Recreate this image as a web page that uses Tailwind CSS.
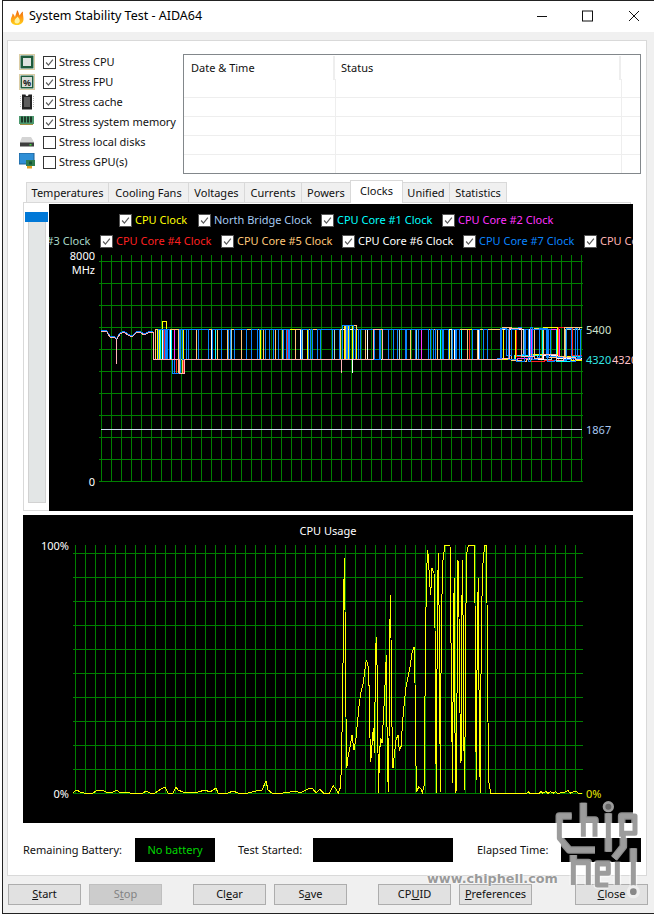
<!DOCTYPE html>
<html lang="en">
<head>
<meta charset="UTF-8">
<title>System Stability Test - AIDA64</title>
<script src="https://cdn.jsdelivr.net/npm/@tailwindcss/browser@4"></script>
</head>
<body class="bg-white">
<svg class="hidden">
  <symbol id="chk" viewBox="0 0 13 13"><path d="M2.500 6.500 5.200 9.500 10.500 3" fill="none" stroke="#5a5a5a" stroke-width="1.400"/></symbol>
</svg>

<div class="relative w-[654px] h-[914px] overflow-hidden font-['Noto_Sans',sans-serif] text-[11px] text-[#111] pl-[2px]">
<div class="h-[914px] border-l border-t border-b border-[#222] bg-[#f0f0f0] flex flex-col">

  <!-- title bar -->
  <div class="h-[31px] bg-white flex items-center shrink-0">
    <svg class="ml-[7px] w-[14px] h-[16px]" viewBox="0 0 14 16">
      <defs><linearGradient id="flame" x1="0" y1="1" x2="0" y2="0"><stop offset="0" stop-color="#ffd21a"/><stop offset=".5" stop-color="#ff9a14"/><stop offset="1" stop-color="#e8600c"/></linearGradient></defs>
      <path d="M7 16C2.500 16 0 13.500 1 9.500 1.500 7.500 2.500 7 2.500 4.500 4 5.500 4.500 7 5 8 5.500 5.500 7 3.500 7 1 8.500 2.500 9 5 9.500 6.500 10.500 5 11.500 3.500 13 2.500 12.500 5 13.500 7 13.500 10 13.500 13.500 11 16 7 16Z" fill="url(#flame)"/>
      <path d="M7 14.500C5 14.500 4 13 4.800 11 6 9 6.800 9 7.500 7.500 8.500 9 10 10 9.800 12 9.600 13.500 8.500 14.500 7 14.500Z" fill="#fff3a0"/>
    </svg>
    <span class="ml-[5px] text-[12.5px] text-black">System Stability Test - AIDA64</span>
    <div class="ml-auto flex items-center -mt-[1px]">
      <svg class="w-[12px] h-[12px] mr-[34px]" viewBox="0 0 12 12"><path d="M1 6.500H11" stroke="#111" stroke-width="1"/></svg>
      <svg class="w-[12px] h-[12px] mr-[34px]" viewBox="0 0 12 12"><rect x=".5" y="1" width="10" height="10" fill="none" stroke="#111"/></svg>
      <svg class="w-[12px] h-[12px] mr-[14px]" viewBox="0 0 12 12"><path d="M1 1 11 11M11 1 1 11" stroke="#111" stroke-width="1"/></svg>
    </div>
  </div>

  <!-- main panel -->
  <div class="mt-[8px] ml-[4px] w-[640px] h-[836px] bg-white border border-[#d9d9d9] shrink-0 flex flex-col">
    <div class="flex pt-[12px] pl-[11px] h-[139px] shrink-0">
      <div class="w-[164px] flex flex-col -mt-px">
        <label class="h-[20px] flex items-center">
          <svg class="w-[16px] h-[16px] mr-[8px]" viewBox="0 0 16 16"><rect x=".5" y=".5" width="15" height="15" fill="none" stroke="#b79a4a" stroke-dasharray="1 1"/><rect x="1.500" y="1.500" width="13" height="13" fill="#1f5c3c"/><rect x="4" y="4" width="8" height="8" fill="#dfe3df"/></svg>
          <span class="w-[13px] h-[13px] border border-[#333] bg-white mr-[3px]"><svg class="w-[11px] h-[11px]"><use href="#chk"/></svg></span>Stress CPU
        </label>
        <label class="h-[20px] flex items-center">
          <svg class="w-[16px] h-[16px] mr-[8px]" viewBox="0 0 16 16"><rect x=".5" y=".5" width="15" height="15" fill="none" stroke="#b79a4a" stroke-dasharray="1 1"/><rect x="1.500" y="1.500" width="13" height="13" fill="#1f5c3c"/><rect x="3" y="3" width="10" height="10" fill="#d8dcd8"/><text x="8" y="11.500" text-anchor="middle" font-size="9" font-weight="700" fill="#222">%</text></svg>
          <span class="w-[13px] h-[13px] border border-[#333] bg-white mr-[3px]"><svg class="w-[11px] h-[11px]"><use href="#chk"/></svg></span>Stress FPU
        </label>
        <label class="h-[20px] flex items-center">
          <svg class="w-[16px] h-[16px] mr-[8px]" viewBox="0 0 16 16"><path d="M3 .5H6.500A1.500 1.500 0 0 0 9.500 .5H13V15.500H3Z" fill="#222"/><rect x="5" y="3" width="6" height="10" fill="#5c5c5c"/><path d="M1.500 2V14M14.500 2V14" stroke="#bbb" stroke-dasharray="1 1"/></svg>
          <span class="w-[13px] h-[13px] border border-[#333] bg-white mr-[3px]"><svg class="w-[11px] h-[11px]"><use href="#chk"/></svg></span>Stress cache
        </label>
        <label class="h-[20px] flex items-center">
          <svg class="w-[16px] h-[16px] mr-[8px] -mt-[3px]" viewBox="0 0 16 16"><rect x="0" y="3" width="15" height="8" fill="#4d9a70"/><path d="M2 5H13M2 8H13" stroke="#1d3a28" stroke-width="3" stroke-dasharray="2 1"/><path d="M1 11.500H14" stroke="#a08c40"/></svg>
          <span class="w-[13px] h-[13px] border border-[#333] bg-white mr-[3px]"><svg class="w-[11px] h-[11px]"><use href="#chk"/></svg></span>Stress system memory
        </label>
        <label class="h-[20px] flex items-center">
          <svg class="w-[16px] h-[16px] mr-[8px]" viewBox="0 0 16 16"><path d="M3 3H12L15 8V12H1V8Z" fill="#d4d4d4"/><rect x="1" y="8.500" width="14" height="4" fill="#3d3d3d"/><rect x="10.500" y="10" width="2" height="1.500" fill="#3fd23f"/></svg>
          <span class="w-[13px] h-[13px] border border-[#333] bg-white mr-[3px]"></span>Stress local disks
        </label>
        <label class="h-[20px] flex items-center">
          <svg class="w-[16px] h-[16px] mr-[8px] -mt-[2px]" viewBox="0 0 16 16"><rect x="0" y="0" width="15" height="11" fill="#2f8fd6" stroke="#1d5f94"/><rect x="7" y="7" width="9" height="6" fill="#2f7d4f"/><rect x="10" y="8.500" width="3" height="3" fill="#153"/><rect x="8" y="13" width="5" height="2.500" fill="#e0a020"/></svg>
          <span class="w-[13px] h-[13px] border border-[#333] bg-white mr-[3px]"></span>Stress GPU(s)
        </label>
      </div>
      <!-- log list -->
      <div class="w-[458px] h-[120px] mt-px border border-[#82878b] flex flex-col">
        <div class="h-[25px] flex items-center relative shrink-0">
          <span class="w-[151px] pl-[7px] pt-px border-r-2 border-[#eeeeee] h-[24px] flex items-center">Date &amp; Time</span>
          <span class="w-[286px] pl-[6px] pt-px border-r-2 border-[#eeeeee] h-[24px] flex items-center">Status</span>
        </div>
        <div class="h-[19px] mt-[-1px] border-b border-[#eeeeee] flex"><span class="w-[152px] border-r border-[#eeeeee]"></span><span class="w-[286px] border-r border-[#eeeeee]"></span></div>
        <div class="h-[19px] border-b border-[#eeeeee] flex"><span class="w-[152px] border-r border-[#eeeeee]"></span><span class="w-[286px] border-r border-[#eeeeee]"></span></div>
        <div class="h-[19px] border-b border-[#eeeeee] flex"><span class="w-[152px] border-r border-[#eeeeee]"></span><span class="w-[286px] border-r border-[#eeeeee]"></span></div>
        <div class="h-[19px] border-b border-[#eeeeee] flex"><span class="w-[152px] border-r border-[#eeeeee]"></span><span class="w-[286px] border-r border-[#eeeeee]"></span></div>
        <div class="flex-1 flex"><span class="w-[152px] border-r border-[#eeeeee]"></span><span class="w-[286px] border-r border-[#eeeeee]"></span></div>
      </div>
    </div>

    <!-- tabs -->
    <div class="ml-[17px] pl-px h-[22px] flex items-end shrink-0 relative z-10">
      <div class="w-[83px] h-[20px] pt-px bg-[#f0f0f0] border border-b-0 border-[#d9d9d9] flex items-center justify-center">Temperatures</div>
      <div class="w-[81px] h-[20px] pt-px -ml-px bg-[#f0f0f0] border border-b-0 border-[#d9d9d9] flex items-center justify-center">Cooling Fans</div>
      <div class="w-[57px] h-[20px] pt-px -ml-px bg-[#f0f0f0] border border-b-0 border-[#d9d9d9] flex items-center justify-center">Voltages</div>
      <div class="w-[58px] h-[20px] pt-px -ml-px bg-[#f0f0f0] border border-b-0 border-[#d9d9d9] flex items-center justify-center">Currents</div>
      <div class="w-[50px] h-[20px] pt-px -ml-px bg-[#f0f0f0] border border-b-0 border-[#d9d9d9] flex items-center justify-center">Powers</div>
      <div class="w-[53px] h-[23px] -ml-px -mb-px pb-[2px] bg-white border border-b-0 border-[#d9d9d9] flex items-center justify-center">Clocks</div>
      <div class="w-[48px] h-[20px] pt-px -ml-px bg-[#f0f0f0] border border-b-0 border-[#d9d9d9] flex items-center justify-center">Unified</div>
      <div class="w-[58px] h-[20px] pt-px -ml-px bg-[#f0f0f0] border border-b-0 border-[#d9d9d9] flex items-center justify-center">Statistics</div>
    </div>

    <!-- tab pane -->
    <div class="ml-[15px] w-[608px] h-[309px] border border-[#d9d9d9] flex pt-px shrink-0">
      <div class="w-[25px] shrink-0 flex flex-col pl-px pt-[8px]">
        <div class="h-[10px] w-[23px] bg-[#0078d7]"></div>
        <div class="ml-[3px] w-[18px] h-[281px] bg-[#e3e6e6] border border-[#d2d2d2] border-t-0"></div>
      </div>
      <div class="relative w-[584px] h-[307px] bg-black overflow-hidden shrink-0">
        <svg id="clock" class="absolute inset-0" width="584" height="307" viewBox="49 204 584 307" font-family="Noto Sans" font-size="11">
          <g id="clockGrid" shape-rendering="crispEdges"></g>
          <g id="clockLines" shape-rendering="crispEdges"></g>
          <text x="95" y="260" text-anchor="end" fill="#fff">8000</text>
          <text x="95" y="274" text-anchor="end" fill="#fff">MHz</text>
          <text x="95" y="486" text-anchor="end" fill="#fff">0</text>
          <text x="586" y="334" fill="#cfe3cf">5400</text>
          <text x="586" y="364" fill="#33e6e6">4320</text>
          <text x="612" y="364" fill="#ffc0c8">4320</text>
          <text x="586" y="434" fill="#a8c8f0">1867</text>
        </svg>
        <div class="relative pt-[6px] pl-[70px] h-[27px] flex items-center whitespace-nowrap">
          <div class="w-[79px] flex items-center text-[#ffff00] shrink-0"><span class="w-[13px] h-[13px] bg-white border border-[#555] mr-[3px]"><svg class="w-[11px] h-[11px]"><use href="#chk"/></svg></span>CPU Clock</div>
          <div class="w-[123px] flex items-center text-[#a6caf0] shrink-0"><span class="w-[13px] h-[13px] bg-white border border-[#555] mr-[3px]"><svg class="w-[11px] h-[11px]"><use href="#chk"/></svg></span>North Bridge Clock</div>
          <div class="w-[121px] flex items-center text-[#00ffff] shrink-0"><span class="w-[13px] h-[13px] bg-white border border-[#555] mr-[3px]"><svg class="w-[11px] h-[11px]"><use href="#chk"/></svg></span>CPU Core #1 Clock</div>
          <div class="w-[121px] flex items-center text-[#ff33ff] shrink-0"><span class="w-[13px] h-[13px] bg-white border border-[#555] mr-[3px]"><svg class="w-[11px] h-[11px]"><use href="#chk"/></svg></span>CPU Core #2 Clock</div>
        </div>
        <div class="relative ml-[-70px] h-[21px] flex items-center whitespace-nowrap">
          <div class="w-[121px] flex items-center text-[#a8d8c8] shrink-0"><span class="w-[13px] h-[13px] bg-white border border-[#555] mr-[3px]"><svg class="w-[11px] h-[11px]"><use href="#chk"/></svg></span>CPU Core #3 Clock</div>
          <div class="w-[121px] flex items-center text-[#ff2020] shrink-0"><span class="w-[13px] h-[13px] bg-white border border-[#555] mr-[3px]"><svg class="w-[11px] h-[11px]"><use href="#chk"/></svg></span>CPU Core #4 Clock</div>
          <div class="w-[121px] flex items-center text-[#ffc878] shrink-0"><span class="w-[13px] h-[13px] bg-white border border-[#555] mr-[3px]"><svg class="w-[11px] h-[11px]"><use href="#chk"/></svg></span>CPU Core #5 Clock</div>
          <div class="w-[121px] flex items-center text-white shrink-0"><span class="w-[13px] h-[13px] bg-white border border-[#555] mr-[3px]"><svg class="w-[11px] h-[11px]"><use href="#chk"/></svg></span>CPU Core #6 Clock</div>
          <div class="w-[121px] flex items-center text-[#0a84ff] shrink-0"><span class="w-[13px] h-[13px] bg-white border border-[#555] mr-[3px]"><svg class="w-[11px] h-[11px]"><use href="#chk"/></svg></span>CPU Core #7 Clock</div>
          <div class="w-[121px] flex items-center text-[#ffb4b4] shrink-0"><span class="w-[13px] h-[13px] bg-white border border-[#555] mr-[3px]"><svg class="w-[11px] h-[11px]"><use href="#chk"/></svg></span>CPU Core #8 Clock</div>
        </div>
      </div>
    </div>

    <!-- cpu usage -->
    <div class="ml-[15px] mt-[4px] w-[610px] h-[308px] bg-black shrink-0 relative">
      <svg class="absolute inset-0" width="610" height="308" viewBox="23 515 610 308" font-family="Noto Sans" font-size="11">
        <g id="usageGrid" shape-rendering="crispEdges"></g>
        <polyline id="usageLine" fill="none" stroke="#ffff00" shape-rendering="crispEdges"/>
        <text x="328" y="535" text-anchor="middle" fill="#fff">CPU Usage</text>
        <text x="69" y="550" text-anchor="end" fill="#fff">100%</text>
        <text x="69" y="798" text-anchor="end" fill="#fff">0%</text>
        <text x="586" y="798" fill="#e8e800">0%</text>
      </svg>
    </div>

    <!-- battery / time row -->
    <div class="ml-[15px] mt-[15px] h-[24px] flex items-center shrink-0">
      <span class="w-[112px]">Remaining Battery:</span>
      <span class="w-[80px] h-[24px] bg-black text-[#00d800] flex items-center justify-center">No battery</span>
      <span class="ml-[23px] w-[75px]">Test Started:</span>
      <span class="w-[140px] h-[24px] bg-black"></span>
      <span class="ml-[24px] w-[84px]">Elapsed Time:</span>
      <span class="w-[80px] h-[24px] bg-black"></span>
    </div>
  </div>

  <!-- buttons -->
  <div class="mt-[8px] pl-[5px] flex h-[21px] shrink-0">
    <button class="w-[73px] bg-[#e1e1e1] border border-[#adadad]"><u>S</u>tart</button>
    <button class="w-[73px] ml-[8px] bg-[#cccccc] border border-[#bfbfbf] text-[#838383]">S<u>t</u>op</button>
    <button class="w-[73px] ml-[31px] bg-[#e1e1e1] border border-[#adadad]">Cl<u>e</u>ar</button>
    <button class="w-[73px] ml-[8px] bg-[#e1e1e1] border border-[#adadad]">S<u>a</u>ve</button>
    <button class="w-[73px] ml-[31px] bg-[#e1e1e1] border border-[#adadad]">CP<u>U</u>ID</button>
    <button class="w-[73px] ml-[8px] bg-[#e1e1e1] border border-[#adadad]"><u>P</u>references</button>
    <button class="w-[73px] ml-[43px] bg-[#e1e1e1] border border-[#adadad]"><u>C</u>lose</button>
  </div>
</div>

<!-- chiphell watermark -->
<span class="absolute left-[427px] top-[869px] font-['DejaVu_Sans',sans-serif] font-bold text-[12.8px] leading-[20px] text-[#9a9a9a] [text-shadow:0_0_2px_#fff,0_0_2px_#fff] whitespace-nowrap">www.chiphell.com</span>
<svg class="absolute left-[540px] top-[790px]" width="114" height="124" viewBox="0 0 342 372" fill="none" stroke-linejoin="round">
  <g stroke="#fff" stroke-opacity=".55" stroke-width="23">
    <path d="M95 78H58V145L88 180H165M130 38V140M130 90H165V140M205 70V185M245 140V78H285V130H250M250 130V170L222 205M100 195V285M100 218H145V285M172 285V222H205V250H172V285H205M232 215V285M280 175V290"/>
  </g>
  <g stroke="#9c9c9c" stroke-width="15">
    <path d="M95 78H58V145L88 180H165M130 38V140M130 90H165V140M205 70V185M245 140V78H285V130H250M250 130V170L222 205M100 195V285M100 218H145V285M172 285V222H205V250H172V285H205M232 215V285M280 175V290"/>
  </g>
  <circle cx="205" cy="50" r="13" stroke="#9c9c9c" stroke-width="8" fill="#666"/>
  <circle cx="280" cy="305" r="15" stroke="#eee" stroke-width="10" fill="#888"/>
</svg>
</div>

<script>
    const NS = "http://www.w3.org/2000/svg";
    const GREEN = "#007f00";

    function line(parent, x1, y1, x2, y2, color) {
        const l = document.createElementNS(NS, "line");
        l.setAttribute("x1", x1); l.setAttribute("y1", y1);
        l.setAttribute("x2", x2); l.setAttribute("y2", y2);
        l.setAttribute("stroke", color);
        parent.appendChild(l);
    }

    function poly(parent, pts, color) {
        const p = document.createElementNS(NS, "polyline");
        p.setAttribute("points", pts.map(q => q.join(",")).join(" "));
        p.setAttribute("fill", "none");
        p.setAttribute("stroke", color);
        parent.appendChild(p);
    }

    // seeded so every render gives the same trace
    let seed = 4711;
    function rnd() {
        seed = (seed * 1664525 + 1013904223) % 4294967296;
        return seed / 4294967296;
    }

    // clock chart grid
    const cg = document.getElementById("clockGrid");
    for (let x = 101.5; x <= 582; x += 10) line(cg, x, 255, x, 481, GREEN);
    for (let y = 261.5; y <= 482; y += 22) line(cg, 99, y, 583, y, GREEN);

    // clock traces
    const cl = document.getElementById("clockLines");
    line(cl, 101, 429.5, 582, 429.5, "#d0dcf0");

    const wave = [[101,331],[104,330],[107,331],[110,336],[114,336],[116,338],[116.5,363],[117,338],[120,333],[124,331],[128,334],[132,336],[136,332],[140,331],[144,334],[148,332],[152,331]];
    // min/max run length per colour: blue and orange switch a lot, the others rarely
    const channels = [
        { c: "#a8d8c8", hi: .5, min: 14, max: 40 }, { c: "#00ffff", hi: .3, min: 20, max: 50 },
        { c: "#ff33ff", hi: .3, min: 16, max: 50 }, { c: "#ff2020", hi: .3, min: 16, max: 50 },
        { c: "#ffff00", hi: .4, min: 12, max: 36 }, { c: "#ffffff", hi: .4, min: 14, max: 40 },
        { c: "#ffc878", hi: .72, min: 4, max: 14 }, { c: "#0a84ff", hi: .4, min: 2, max: 8 },
        { c: "#0a84ff", hi: .35, min: 3, max: 10 }, { c: "#ffb4b4", hi: .06, min: 6, max: 16 }
    ];
    channels.forEach((ch, i) => {
        const pts = wave.map(q => [q[0], q[1] + (i % 3 === 0 ? 1 : 0)]);
        pts.push([153, 332], [153, 359]);
        let x = 155, y = 359;
        while (x < 582) {
            let up = rnd() < ch.hi;
            let run = ch.min + Math.floor(rnd() * (ch.max - ch.min));
            if (x < 180 || (x > 338 && x < 356)) run = 2 + Math.floor(rnd() * 4);
            let ny = up ? 329 : 359;
            if (x > 495) {
                run = Math.min(run, 14);
                ny += up ? Math.floor(rnd() * 3) - 2 : Math.floor(rnd() * 8) - 5;
            }
            if (x > 160 && x < 168 && up && i === 4) ny = 321;
            if (x > 171 && x < 180 && !up && rnd() < .6) ny = 373;
            if (x > 341 && x < 353 && up) ny = 325;
            pts.push([x, y], [x, ny]);
            x += run;
            y = ny;
        }
        pts.push([582, y]);
        poly(cl, pts, ch.c);
    });
    // single spikes below the base line
    poly(cl, [[341.5,359],[341.5,373]], "#ffb4b4");
    poly(cl, [[352.5,359],[352.5,373]], "#ffffff");

    // usage chart grid
    const ug = document.getElementById("usageGrid");
    for (let x = 75.5; x <= 576; x += 10) line(ug, x, 545, x, 793, GREEN);
    for (let y = 553.5; y <= 794; y += 24) line(ug, 73, y, 583, y, GREEN);

    // usage trace, left flat part in page px, the rest read off a 3x crop
    const flat = [[73,793],[75,791],[77,790],[80,792],[84,793],[93,793],[96,791],[100,790],[104,791],[108,793],[113,792],[117,790],[120,793],[125,792],[130,793],[143,793],[146,791],[150,793],[155,793],[158,791],[163,788],[165,787],[168,793],[173,793],[176,787],[178,790],[183,792],[190,793],[198,792],[205,790],[210,792],[216,788],[218,793],[228,793],[233,791],[238,793],[248,793],[256,791],[262,790],[266,781],[268,790],[272,793],[283,793],[290,792],[296,791],[300,793],[306,790],[310,788],[313,789],[316,793]];
    const crop = [0,808,12,820,28,820,40,798,48,808,55,820,62,800,65,690,68,515,71,250,73,114,75,270,78,590,80,745,84,710,90,680,96,645,102,690,108,655,113,600,118,550,124,510,130,490,136,440,139,420,145,440,148,520,150,655,152,725,156,675,160,625,164,700,166,415,169,350,172,470,174,700,176,820,178,705,182,655,186,670,190,600,193,540,197,450,199,405,202,710,205,815,207,660,209,375,211,225,213,355,216,620,219,745,223,705,228,660,234,645,238,690,243,680,248,600,253,550,258,500,264,470,270,440,276,400,283,380,285,490,287,700,290,815,296,800,302,805,307,820,313,795,314,630,317,315,320,145,323,90,326,130,329,190,332,225,336,145,342,160,345,325,347,640,349,820,350,640,352,280,355,100,358,320,361,815,364,320,368,130,372,95,375,76,390,76,392,255,395,610,398,790,400,330,403,175,405,640,408,820,410,650,414,120,417,290,420,580,423,730,425,275,428,120,431,640,434,810,437,320,440,100,445,76,463,76,465,250,467,600,469,780,472,320,475,175,478,650,481,820,484,320,488,140,492,95,495,76,499,76,501,250,504,605,507,790,512,820,620,820,625,815,630,820,658,820,663,815,668,820,678,815,684,820,692,815,700,820,706,815,712,820,730,818,738,815,744,810,750,820,760,815,770,815,776,820,786,820];
    const pts = flat.map(q => q.join(","));
    for (let i = 0; i < crop.length; i += 2) {
        pts.push((320 + crop[i] / 3).toFixed(1) + "," + (520 + crop[i + 1] / 3).toFixed(1));
    }
    document.getElementById("usageLine").setAttribute("points", pts.join(" "));
</script>
</body>
</html>
